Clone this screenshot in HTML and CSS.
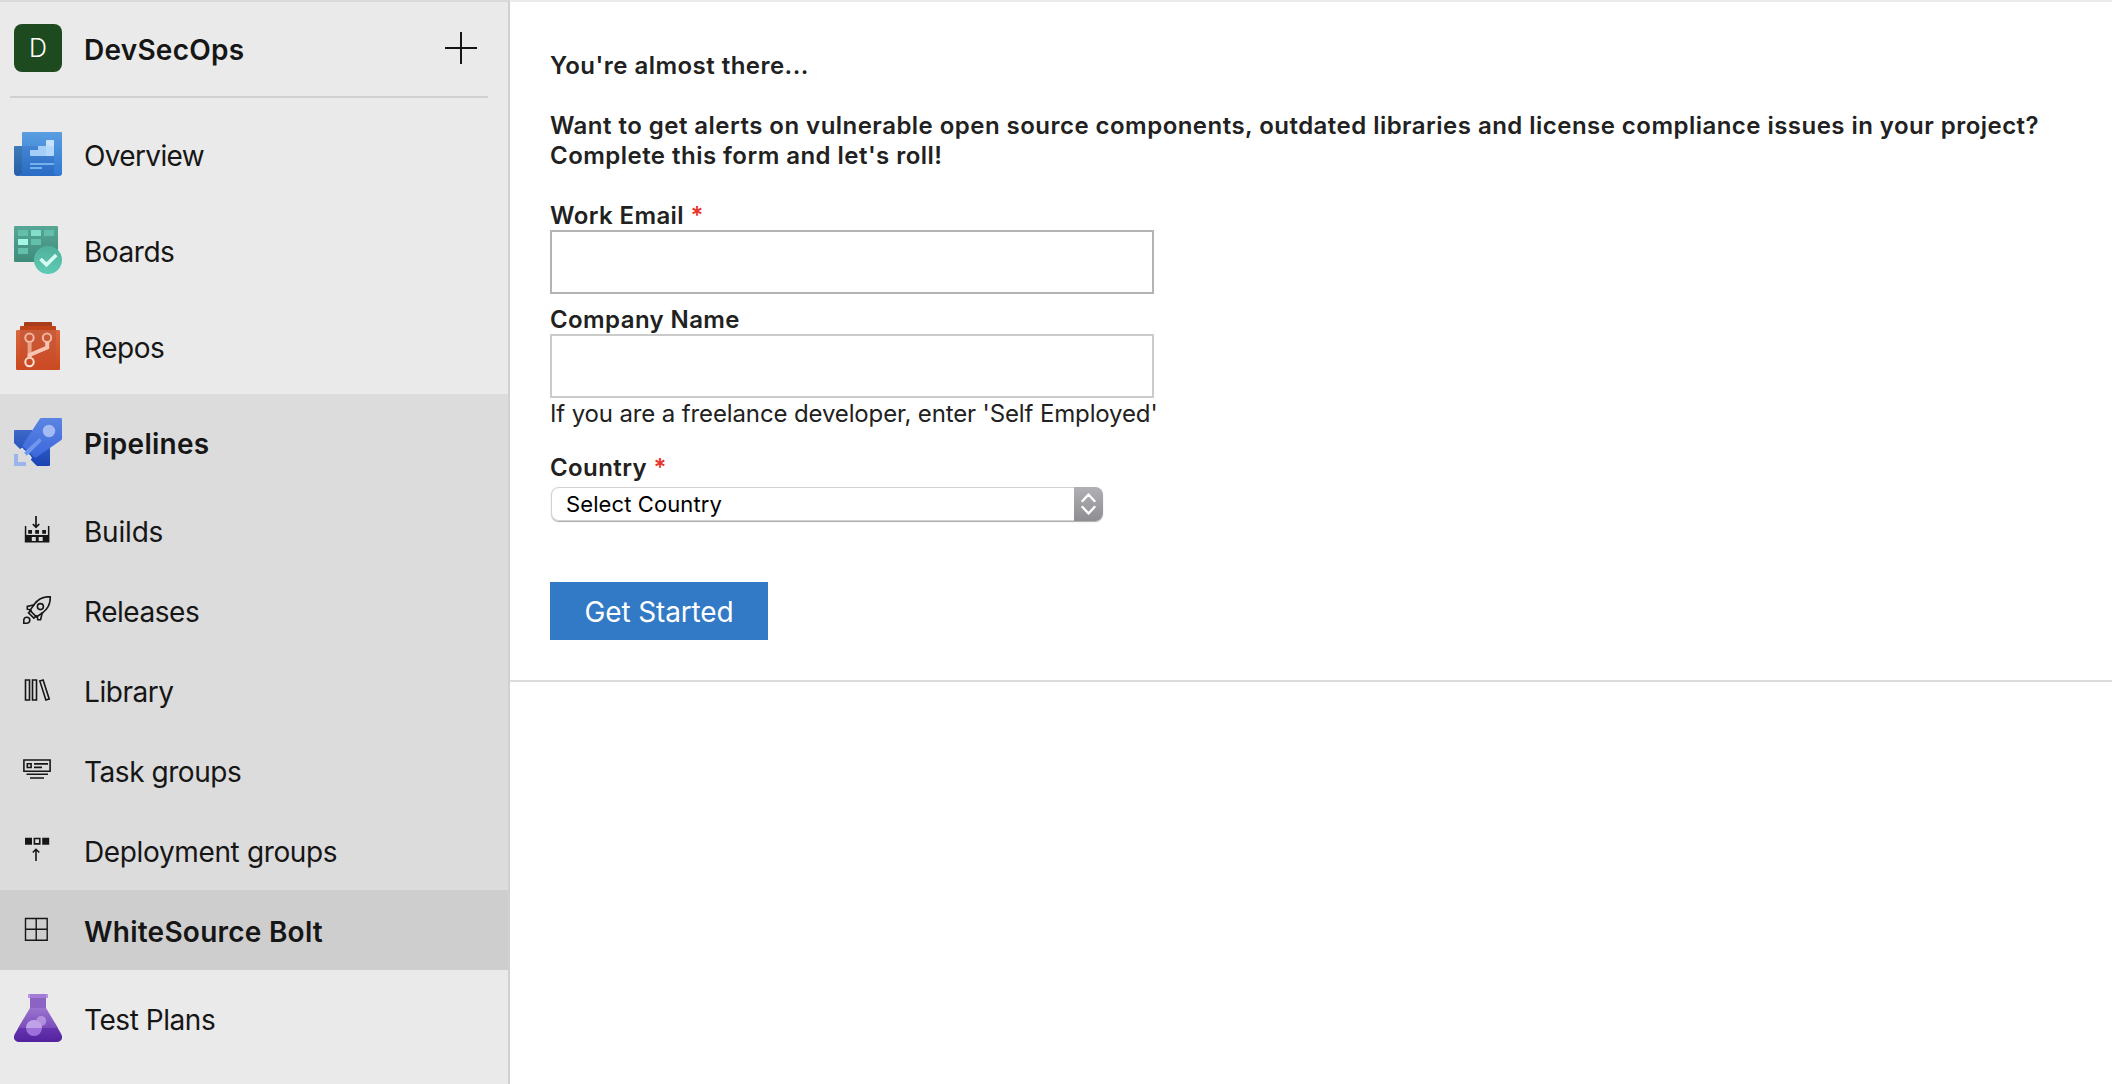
FILE: index.html
```html
<!DOCTYPE html>
<html lang="en">
<head>
<meta charset="utf-8">
<title>DevSecOps - WhiteSource Bolt</title>
<link rel="stylesheet" href="styles.css">
</head>
<body>
<div class="app">
  <nav class="sidebar">
    <header class="project">
      <span class="avatar">D</span>
      <span class="label bold">DevSecOps</span>
      <svg class="plus" viewBox="0 0 32 32"><path d="M16 0v32M0 16h32" stroke="#161616" stroke-width="2"/></svg>
    </header>
    <a class="item">
      <svg class="hub" viewBox="0 0 48 48">
        <defs>
          <linearGradient id="ov1" x1="0" y1="0" x2="0" y2="1"><stop offset="0" stop-color="#5a9ee0"/><stop offset="1" stop-color="#2f78d4"/></linearGradient>
          <linearGradient id="ov2" x1="0" y1="0" x2="0" y2="1"><stop offset="0" stop-color="#3f7ab8"/><stop offset="1" stop-color="#2560a8"/></linearGradient>
          <linearGradient id="ov3" x1="0" y1="0" x2="0" y2="1"><stop offset="0" stop-color="#4385d2"/><stop offset="1" stop-color="#2a6bc4"/></linearGradient>
        </defs>
        <path d="M1 16h8v26q0 4-5 4-4 0-4-4V17q0-1 1-1z" fill="url(#ov2)"/>
        <path d="M9 2h38q1 0 1 1v40q0 3-3 3H5q3 0 3-4V3q0-1 1-1z" fill="url(#ov1)"/>
        <path d="M8 16h32v26q0 3 3 4H5q3 0 3-4z" fill="url(#ov3)"/>
        <path d="M16 20h8v-4h8v10H17q-1 0-1-1z" fill="#a3cef9"/>
        <path d="M32 11q0-1 1-1h6q1 0 1 1v5h-8z" fill="#c8e2fb"/><path d="M32 16h8v9q0 1-1 1h-7z" fill="#b4d8fc"/>
        <path d="M16 34h24M16 38h12" stroke="#72b0f0" stroke-width="2"/>
      </svg>
      <span class="label tight">Overview</span>
    </a>
    <a class="item">
      <svg class="hub" viewBox="0 0 48 48">
        <defs>
          <linearGradient id="bd1" x1="0" y1="0" x2="0" y2="1"><stop offset="0" stop-color="#56a795"/><stop offset="1" stop-color="#3f8c7b"/></linearGradient>
          <linearGradient id="bd2" x1="0" y1="0" x2="0" y2="1"><stop offset="0" stop-color="#50af9b"/><stop offset="1" stop-color="#5fccb5"/></linearGradient>
        </defs>
        <rect width="44" height="36" rx="1.3" fill="url(#bd1)"/>
        <path d="M4 4h10v6H4zM30 4h10v6H30zM17 13h10v6H17zM4 22h10v6H4z" fill="#63bfab"/>
        <path d="M17 4h10v6H17z" fill="#82ddca"/><path d="M4 13h10v6H4z" fill="#a2f7e5"/>
        <circle cx="34" cy="34" r="14" fill="url(#bd2)"/>
        <path d="M26.500 33l6 5.800 9.800-9.800" fill="none" stroke="#d5fbf3" stroke-width="3.600"/>
      </svg>
      <span class="label">Boards</span>
    </a>
    <a class="item">
      <svg class="hub" viewBox="0 0 48 48">
        <defs>
          <linearGradient id="rp1" x1="0" y1="0" x2="0" y2="1"><stop offset="0" stop-color="#d8683c"/><stop offset="1" stop-color="#cb481e"/></linearGradient>
          <linearGradient id="rp2" x1="0" y1="0" x2="0" y2="1"><stop offset="0" stop-color="#c4573a"/><stop offset="1" stop-color="#cb4b24"/></linearGradient>
          <linearGradient id="rp3" gradientUnits="userSpaceOnUse" x1="0" y1="12" x2="0" y2="44"><stop offset="0" stop-color="#f2b29a"/><stop offset="1" stop-color="#fde5da"/></linearGradient>
        </defs>
        <path d="M11 0h26q1 0 1 1v4H10V1q0-1 1-1z" fill="#a83d1c"/>
        <path d="M7 4h34q1 0 1 1v4H6V5q0-1 1-1z" fill="#bf4218"/>
        <rect x="2" y="8" width="44" height="40" rx="1.300" fill="url(#rp1)"/>
        <path d="M6 8h36v32l-6 8H12l-6-6z" fill="url(#rp2)" opacity=".75"/>
        <g fill="none" stroke="url(#rp3)" stroke-width="2"><circle cx="15.500" cy="15.800" r="4.200"/><circle cx="33" cy="15.800" r="4.200"/><circle cx="15.500" cy="40" r="4.200"/></g>
        <path d="M15.600 20v16" fill="none" stroke="#eaa085" stroke-width="4"/>
        <path d="M33.200 20v5.500L15.600 33v3.500" fill="none" stroke="#f7c5b1" stroke-width="4"/>
      </svg>
      <span class="label">Repos</span>
    </a>
    <section class="group">
      <a class="item">
        <svg class="hub" viewBox="0 0 48 48">
          <defs>
            <linearGradient id="pl1" x1="0" y1="0" x2="0" y2="1"><stop offset="0" stop-color="#3c68c8"/><stop offset="1" stop-color="#1b44b4"/></linearGradient>
            <linearGradient id="pl2" x1="0" y1="0" x2="0" y2="1"><stop offset="0" stop-color="#5b84e2"/><stop offset="1" stop-color="#3c68dc"/></linearGradient>
          </defs>
          <path d="M1 12h24l11 14v21q0 1-1 1H23l-6-6v-4L8 30l-2 1-6-6V13q0-1 1-1z" fill="url(#pl1)"/>
          <path d="M27.500 0H47q1 0 1 1v19.500q0 1-1 1.800L23 39q-2 1-3.500-.5l-10-9.500q-1.300-1-.5-2.500L25.500 1.200q.8-1.200 2-1.200z" fill="url(#pl2)"/>
          <circle cx="35" cy="13" r="6.200" fill="#a4baf2"/>
          <path d="M9.800 34.500L25.300 20.200l2.600 2.600L13 37.800z" fill="#6f95ed"/>
          <path d="M7.500 30.500l3.500 3.500M14 37l3.500 3.500" stroke="#dce4f8" stroke-width="2" stroke-dasharray="2 1"/>
          <path d="M0 36h4v8h8v4H0z" fill="#9bb4ee"/>
        </svg>
        <span class="label bold">Pipelines</span>
      </a>
      <a class="item sub">
        <svg class="glyph" viewBox="0 0 28 28"><path d="M13 0v11M9.800 8l3.200 3.200L16.300 8" fill="none" stroke="#161616" stroke-width="1.700"/><path fill-rule="evenodd" d="M1.800 10h1.500v9h21.600v-9h1.500v16.600H1.800zM8.800 21v4h4v-4zM15.700 21v4h4v-4z"/><path d="M5.200 14H9v3.700H5.200zM12.200 14H16v3.700h-3.800zM19.200 14H23v3.700h-3.800z"/></svg>
        <span class="label builds">Builds</span>
      </a>
      <a class="item sub">
        <svg class="glyph line" viewBox="0 0 28 28"><path d="M27.300.7C20.500.5 15.500 2.500 11.500 8L7 14.300l6.500 6.700 6.500-4.500C25.500 12 27.500 7.500 27.300.7z"/><circle cx="17.400" cy="10.600" r="3"/><path d="M11.500 8.700l-7.200 1.700v2.800l4 .8M19.300 16.500l-1.700 7.200h-2.800l-.8-4M8.500 14l-3 2.800 5.300 5.300 3-2.800M.8 27.200V24A3 3 0 1 1 4 27.200z"/></svg>
        <span class="label">Releases</span>
      </a>
      <a class="item sub">
        <svg class="glyph line" viewBox="0 0 28 28"><path d="M2.500 4h4v20h-4zM9.500 4h4v20h-4zM16.800 4.900l3.300-.9 6.100 19-3.300 1z"/></svg>
        <span class="label">Library</span>
      </a>
      <a class="item sub">
        <svg class="glyph line" viewBox="0 0 28 28"><path d="M.9 4h26.200v11.200H.9zM4.300 7.700h3.800v3.800H4.300zM11 7.900h14M11 11.400h8M3.500 18.300h21.500M7 22h14"/></svg>
        <span class="label">Task groups</span>
      </a>
      <a class="item sub">
        <svg class="glyph" viewBox="0 0 28 28"><path d="M2 1.700h7v7H2zM19.200 1.700h7v7h-7z"/><path d="M11.400 2.500h5.400v5.400h-5.400zM13 25V13M9.800 16.500l3.200-3.200 3.300 3.200" fill="none" stroke="#161616" stroke-width="1.600"/></svg>
        <span class="label long">Deployment groups</span>
      </a>
      <a class="item sub selected">
        <svg class="glyph line thin" viewBox="0 0 28 28"><path d="M2.500 2.500h21.700v21.700H2.500zM13.200 2.500v21.700M2.500 13.300h21.700"/></svg>
        <span class="label bold">WhiteSource Bolt</span>
      </a>
    </section>
    <a class="item">
      <svg class="hub" viewBox="0 0 48 48">
        <defs>
          <linearGradient id="tp1" x1="0" y1="0" x2="0" y2="1"><stop offset="0" stop-color="#9a74d0"/><stop offset="1" stop-color="#7a4cba"/></linearGradient>
          <linearGradient id="tp2" x1="0" y1="0" x2="0" y2="1"><stop offset="0" stop-color="#6534ae"/><stop offset="1" stop-color="#53239f"/></linearGradient>
        </defs>
        <path d="M16 14h16l12 20H4z" fill="url(#tp1)"/>
        <path d="M16 3h16v11H16z" fill="#8a63c4"/>
        <path d="M14 0h20v4H14z" fill="#b696e2"/><path d="M16 0h16v4H16z" fill="#a27bd6"/>
        <path d="M4.300 34h39.400l3.500 6q2 4-.5 6.500-1.500 1.500-4 1.500H5.300q-2.500 0-4-1.500Q-1.200 44 .8 40z" fill="url(#tp2)"/>
        <circle cx="20" cy="34" r="8" fill="#9e70da"/>
        <path d="M12 34a8 8 0 0 1 16 0z" fill="#c0a2e8"/>
        <circle cx="27.200" cy="27" r="5" fill="#c0a2e8" opacity=".75"/>
      </svg>
      <span class="label">Test Plans</span>
    </a>
  </nav>
  <main class="main">
    <form class="panel">
      <p class="intro">You're almost there...</p>
      <p class="intro">Want to get alerts on vulnerable open source components, outdated libraries and license compliance issues in your project?<br>Complete this form and let's roll!</p>
      <label class="field-label" for="email">Work Email <span class="required">*</span></label>
      <input class="field email" id="email" type="text">
      <label class="field-label" for="company">Company Name</label>
      <input class="field company" id="company" type="text">
      <p class="hint">If you are a freelance developer, enter 'Self Employed'</p>
      <span class="field-label">Country <span class="required">*</span></span>
      <div class="select">
        <span class="value">Select Country</span>
        <span class="stepper"><svg viewBox="0 0 28 34"><path d="M8.500 14l6-6.500 6 6.500M8.500 20l6 6.500 6-6.500" fill="none" stroke="#fff" stroke-width="2.400" stroke-linecap="round" stroke-linejoin="round"/></svg></span>
      </div>
      <button class="submit" type="button">Get Started</button>
    </form>
  </main>
</div>
</body>
</html>
```
FILE: styles.css
```css
* { box-sizing: border-box; }
body {
  margin: 0;
  font-family: Inter, "Liberation Sans", sans-serif;
  color: #212121;
  background: #fff;
}
.app { display: flex; height: 1084px; overflow: hidden; }

.sidebar {
  flex: none;
  width: 510px;
  background: #eaeaea;
  border-top: 2px solid #d9d9d9;
  border-right: 2px solid #d0d0d0;
  color: #161616;
}
.project {
  display: flex;
  align-items: center;
  height: 96px;
  margin: 0 20px 8px 10px;
  padding: 0 11px 2px 4px;
  border-bottom: 2px solid #d0d0d0;
}
.avatar {
  width: 48px;
  height: 48px;
  border-radius: 8px;
  background: #1e4a20;
  color: #fff;
  font-size: 25px;
  font-weight: 300;
  line-height: 49px;
  text-align: center;
}
.label {
  margin-left: 22px;
  padding-top: 4px;
  font-size: 28px;
  line-height: 34px;
  letter-spacing: -0.45px;
  white-space: nowrap;
}
.tight { letter-spacing: -0.65px; }
.long { letter-spacing: -0.36px; }
.builds { letter-spacing: -0.2px; }
.bold { font-weight: 600; letter-spacing: 0.24px; }
.plus { width: 32px; height: 32px; margin-left: auto; }
.item { display: flex; align-items: center; height: 96px; padding-left: 14px; }
.hub { flex: none; width: 48px; height: 48px; }
.group { background: #dcdcdc; }
.sub { height: 80px; padding-left: 23px; }
.sub .label { margin-left: 33px; }
.selected { background: #cecece; }
.glyph { flex: none; width: 28px; height: 28px; fill: #161616; }
.line { fill: none; stroke: #161616; stroke-width: 1.6; }
.thin { stroke-width: 1.4; }

.main { flex: 1; min-width: 0; border-top: 2px solid #ebebeb; }
.panel {
  display: flex;
  flex-direction: column;
  align-items: flex-start;
  height: 680px;
  padding: 49px 40px 0;
  border-bottom: 2px solid #dcdcdc;
  font-size: 24px;
  line-height: 30px;
}
.intro { margin: 0 0 30px; font-weight: 600; letter-spacing: 0.467px; white-space: nowrap; }
.field-label { font-weight: 600; letter-spacing: 0.4px; }
.required { color: #e8372c; }
.field {
  width: 604px;
  height: 64px;
  margin: -1px 0 1px;
  border: 2px solid #cbcbcb;
  background: #fff;
}
.email { border-color: #b3b3b3; margin-bottom: 11px; }
.hint { margin: 0 0 24px; letter-spacing: -0.13px; white-space: nowrap; }
.select {
  display: flex;
  width: 552px;
  height: 34px;
  margin: 4px 0 0 1px;
  border-radius: 8px;
  background: #fff;
  box-shadow: inset 0 0 0 1px #d2d2d2, 0 1px 1px #aaa;
  overflow: hidden;
}
.value { flex: 1; padding-left: 15px; font-size: 22px; line-height: 34px; letter-spacing: 0.1px; color: #000; }
.stepper { width: 29px; background: linear-gradient(#b1b0b4, #8e8d92); }
.stepper svg { display: block; width: 28px; height: 34px; }
.submit {
  width: 218px;
  height: 58px;
  margin-top: 61px;
  padding: 2px 0 0;
  border: 0;
  background: #3279c6;
  color: #fff;
  font: 400 28px/34px Inter, "Liberation Sans", sans-serif;
  letter-spacing: -0.15px;
}
```
